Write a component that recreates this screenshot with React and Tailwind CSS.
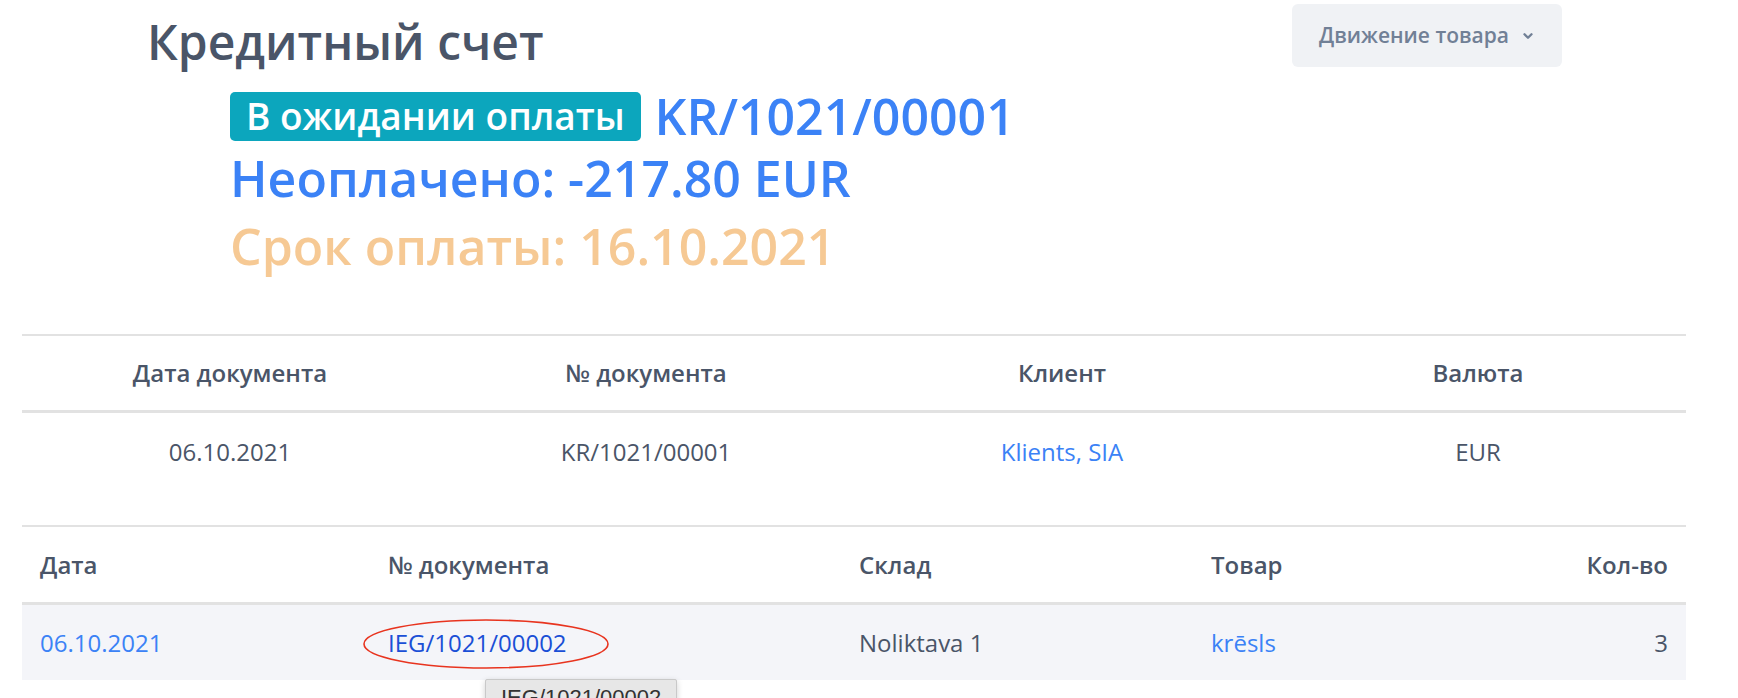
import { ChevronDown } from 'lucide-react'

const docCols = [
  { label: 'Дата документа', value: '06.10.2021' },
  { label: '№ документа', value: 'KR/1021/00001' },
  { label: 'Клиент', value: 'Klients, SIA', link: true },
  { label: 'Валюта', value: 'EUR' },
]

function DocTable() {
  return (
    <div className="border-t-2 border-[#e2e2e2]">
      <div className="grid grid-cols-4 h-[77px] items-center border-b-[3px] border-[#e2e2e2]">
        {docCols.map((c) => (
          <div key={c.label} className="text-center text-[24px] font-semibold text-[#4a5568]">
            {c.label}
          </div>
        ))}
      </div>
      <div className="grid grid-cols-4 h-[78px] items-center">
        {docCols.map((c) => (
          <div
            key={c.label}
            className={`text-center text-[24px] ${c.link ? 'text-[#3b82f6]' : 'text-[#4a5568]'}`}
          >
            {c.value}
          </div>
        ))}
      </div>
    </div>
  )
}

function MovesTable() {
  return (
    <div className="relative border-t-2 border-[#e2e2e2] mt-[34px]">
      <div className="grid grid-cols-[348px_471px_352px_1fr_auto] h-[78px] items-center px-[18px] border-b-[3px] border-[#e2e2e2] text-[24px] font-semibold text-[#4a5568]">
        <div>Дата</div>
        <div>№ документа</div>
        <div>Склад</div>
        <div>Товар</div>
        <div className="text-right">Кол-во</div>
      </div>
      <div className="grid grid-cols-[348px_471px_352px_1fr_auto] h-[75px] items-center px-[18px] bg-[#f4f5f9] text-[24px] text-[#4a5568]">
        <div className="text-[#3b82f6]">06.10.2021</div>
        <div className="text-[#1a4fd6]">IEG/1021/00002</div>
        <div>Noliktava 1</div>
        <div className="text-[#3b82f6]">krēsls</div>
        <div className="text-right">3</div>
      </div>

      {/* red marker drawn around the document link */}
      <svg className="absolute left-[340px] top-[91px] pointer-events-none" width="250" height="53" viewBox="0 0 250 53">
        <ellipse cx="124" cy="26" rx="122" ry="24" fill="none" stroke="#e8341f" strokeWidth="1.6" />
      </svg>

      {/* native tooltip */}
      <div className="absolute left-[463px] top-[152px] h-[34px] px-[15px] pt-[4px] bg-[#e7e7e7] border border-[#c9c9c9] rounded-[2px] shadow-[0_2px_6px_rgba(0,0,0,0.18)] font-['Liberation_Sans',sans-serif] text-[22px] leading-[27px] text-[#333]">
        IEG/1021/00002
      </div>
    </div>
  )
}

export default function App() {
  return (
    <div className="h-[698px] overflow-hidden bg-white pl-[22px] pr-[52px] font-['Open_Sans',sans-serif]">
      <div className="flex items-start">
        <div className="flex-1 pl-[125px] pt-[16px]">
          <h1 className="text-[48px] leading-[52px] font-semibold text-[#4a5568]">Кредитный счет</h1>
          <div className="pl-[83px] pt-[20px] font-semibold">
            <div className="flex items-center gap-[14px] h-[56px]">
              <span className="bg-[#0ca6bd] text-white rounded-[5px] px-[16px] h-[49px] flex items-center text-[37px]">
                В ожидании оплаты
              </span>
              <span className="text-[50px] text-[#3b82f6]">KR/1021/00001</span>
            </div>
            <div className="h-[68px] flex items-center text-[50px] text-[#3b82f6]">Неоплачено: -217.80 EUR</div>
            <div className="h-[68px] flex items-center text-[50px] text-[#f6c994]">Срок оплаты: 16.10.2021</div>
          </div>
        </div>
        <button className="mt-[4px] mr-[124px] w-[270px] h-[63px] rounded-[6px] bg-[#f0f2f5] flex items-center justify-center gap-[12px] text-[21px] font-semibold text-[#718096]">
          Движение товара
          <ChevronDown size={14} strokeWidth={4} />
        </button>
      </div>

      <div className="mt-[54px]">
        <DocTable />
        <MovesTable />
      </div>
    </div>
  )
}
